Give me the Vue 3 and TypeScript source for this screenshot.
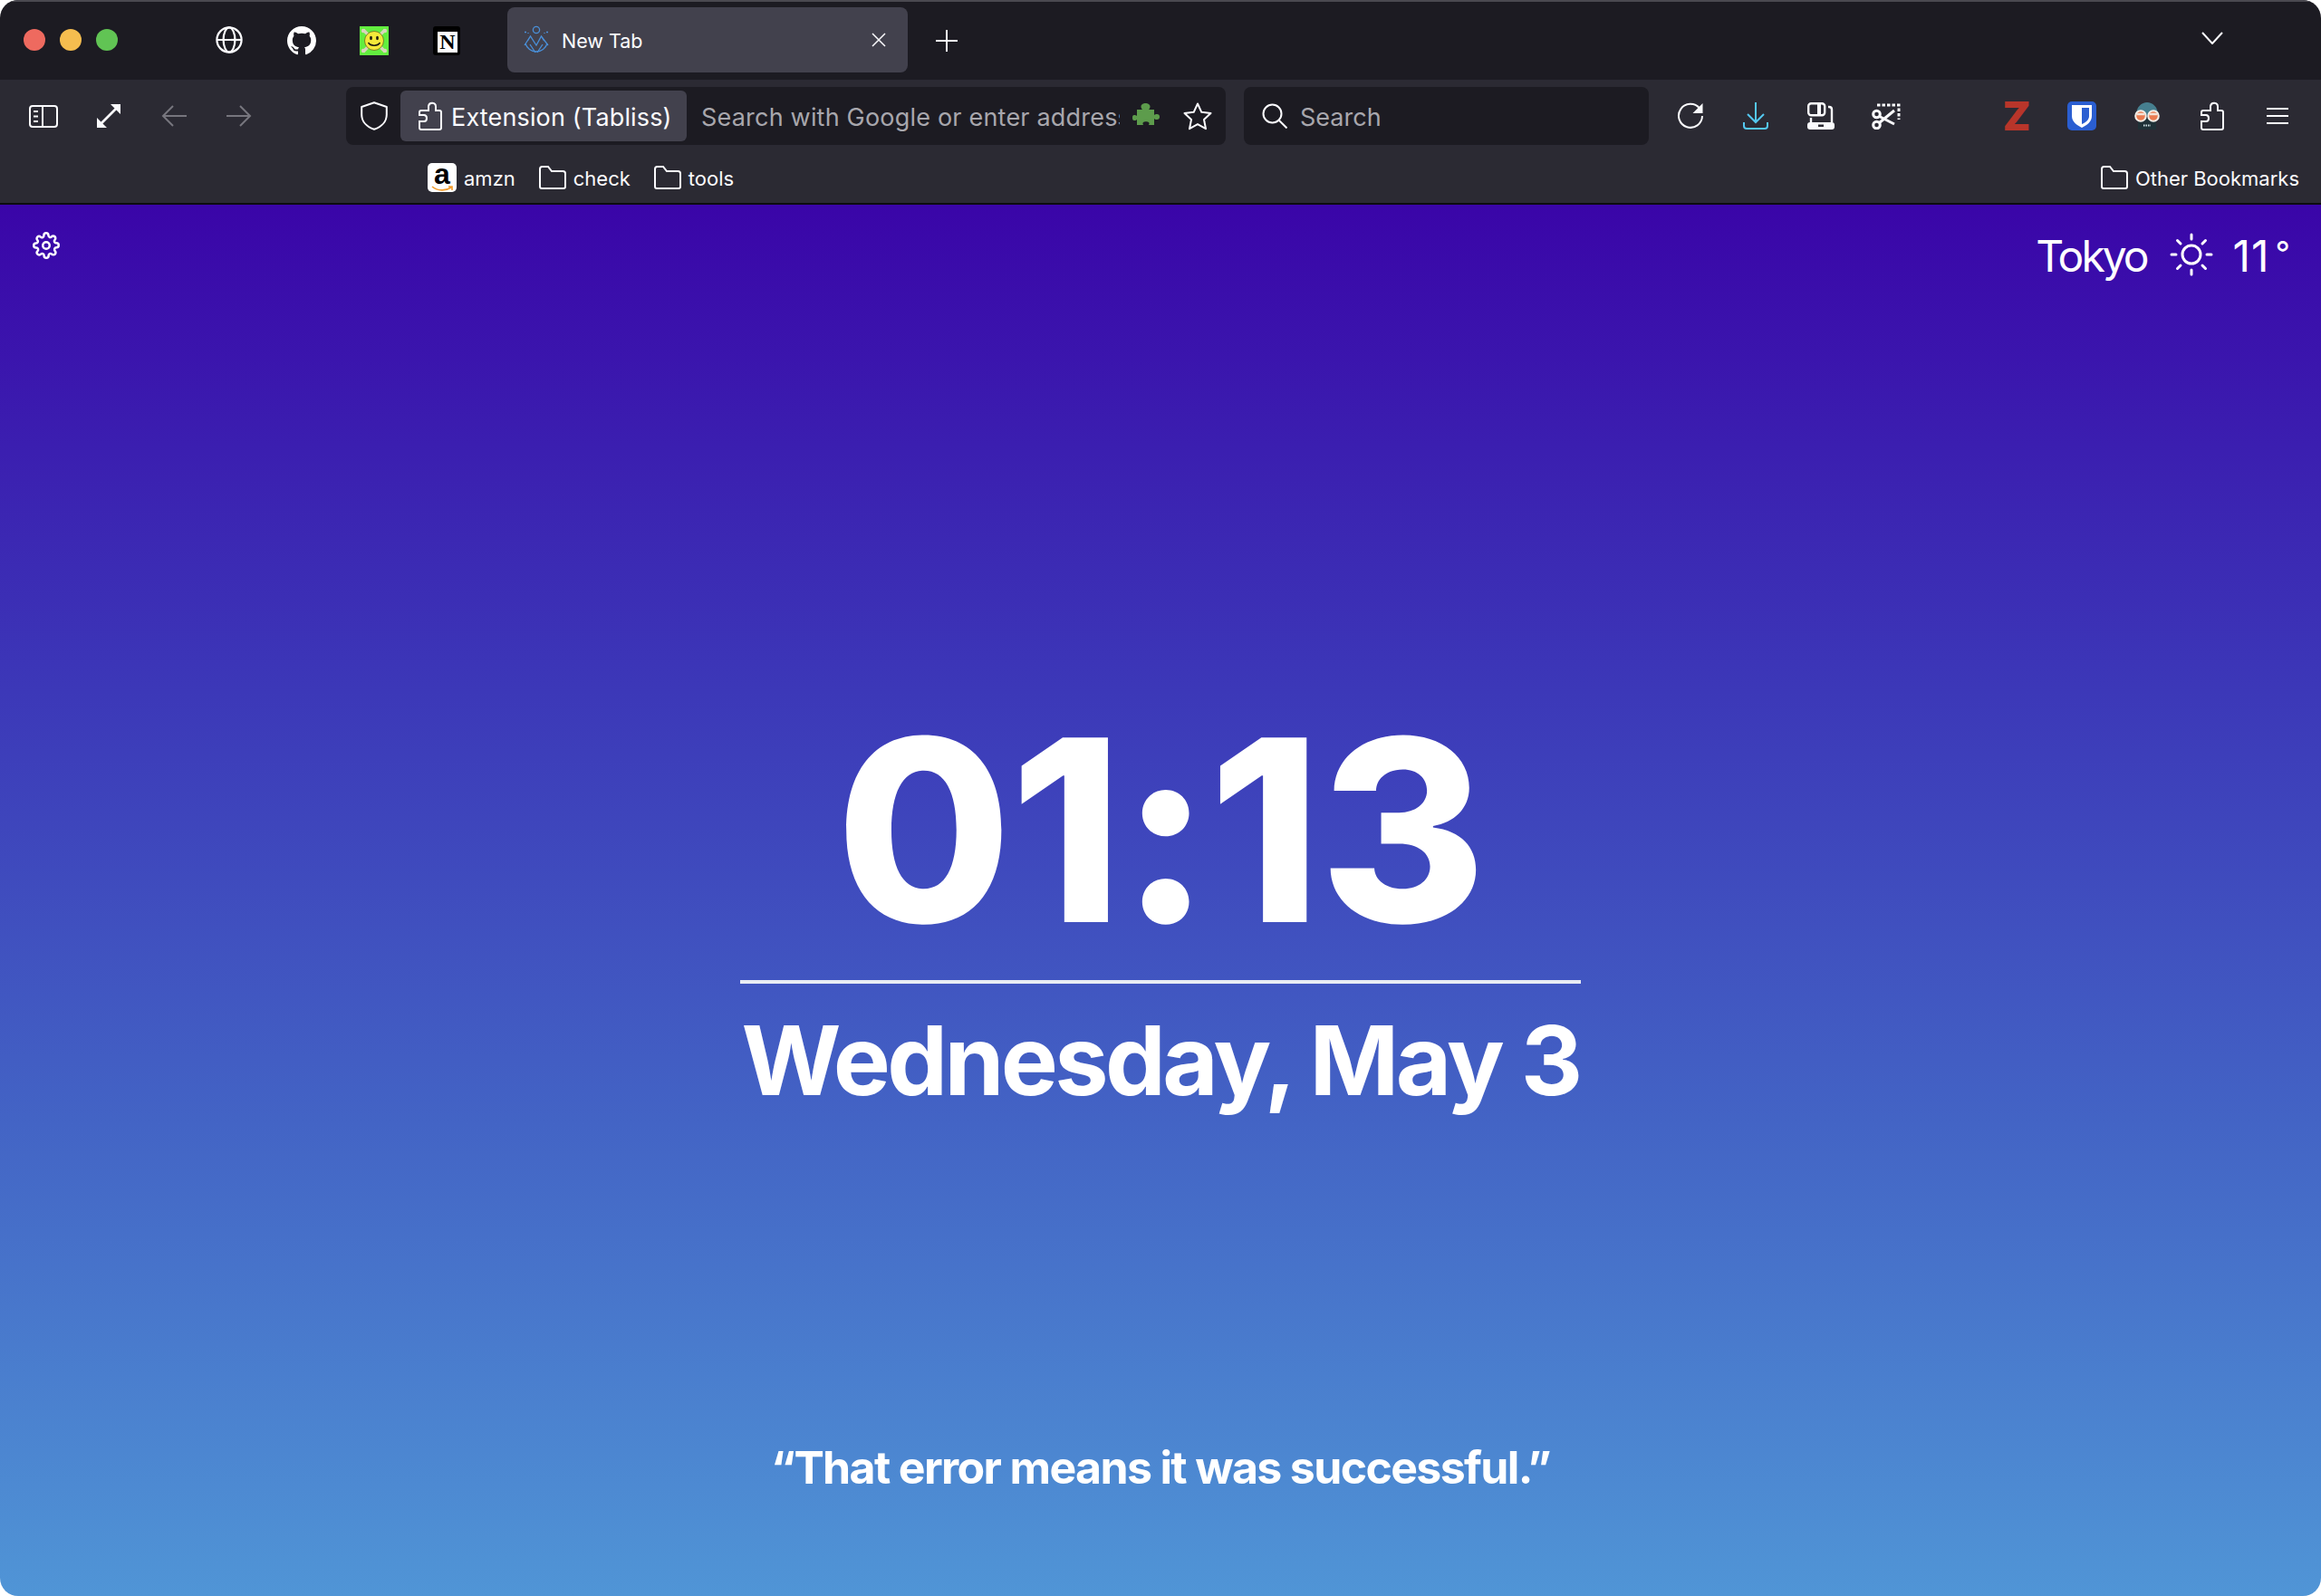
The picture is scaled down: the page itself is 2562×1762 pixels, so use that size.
<script setup lang="ts">
const bookmarks = ["check", "tools"]
</script>

<template>
<div class="window">
    <div class="titlebar">
        <div class="lights">
            <span class="light red"></span>
            <span class="light yellow"></span>
            <span class="light green"></span>
        </div>
        <div class="pinned">
            <div class="pin">
                <svg width="30" height="30" viewBox="0 0 30 30" fill="none" stroke="#fbfbfe" stroke-width="2.2">
                    <circle cx="15" cy="15" r="13.6"/>
                    <ellipse cx="15" cy="15" rx="6.4" ry="13.6"/>
                    <path d="M1.5 15h27"/>
                </svg>
            </div>
            <div class="pin">
                <svg width="32" height="32" viewBox="0 0 16 16" fill="#fff">
                    <path d="M8 0C3.58 0 0 3.58 0 8c0 3.54 2.29 6.53 5.47 7.59.4.07.55-.17.55-.38 0-.19-.01-.82-.01-1.49-2.01.37-2.53-.49-2.69-.94-.09-.23-.48-.94-.82-1.13-.28-.15-.68-.52-.01-.53.63-.01 1.08.58 1.23.82.72 1.21 1.87.87 2.33.66.07-.52.28-.87.51-1.07-1.78-.2-3.64-.89-3.64-3.95 0-.87.31-1.59.82-2.15-.08-.2-.36-1.02.08-2.12 0 0 .67-.21 2.2.82.64-.18 1.32-.27 2-.27.68 0 1.36.09 2 .27 1.53-1.04 2.2-.82 2.2-.82.44 1.1.16 1.92.08 2.12.51.56.82 1.27.82 2.15 0 3.07-1.87 3.75-3.65 3.95.29.25.54.73.54 1.48 0 1.07-.01 1.93-.01 2.2 0 .21.15.46.55.38A8.013 8.013 0 0016 8c0-4.42-3.58-8-8-8z"/>
                </svg>
            </div>
            <div class="pin">
                <svg width="32" height="32" viewBox="0 0 32 32">
                    <rect width="32" height="32" fill="#63ee3f"/>
                    <path d="M4 4L28 28M28 4L4 28" stroke="#d9d5bb" stroke-width="3.4"/>
                    <circle cx="4" cy="5" r="2.200" fill="#d9d5bb"/>
                    <circle cx="28" cy="5" r="2.200" fill="#d9d5bb"/>
                    <circle cx="4" cy="27" r="2.200" fill="#d9d5bb"/>
                    <circle cx="28" cy="27" r="2.200" fill="#d9d5bb"/>
                    <circle cx="16" cy="16" r="10.500" fill="#f3e93a" stroke="#6b6a22" stroke-width=".8"/>
                    <ellipse cx="12.5" cy="13" rx="1.4" ry="2.2" fill="#1c1b10"/>
                    <ellipse cx="19.5" cy="13" rx="1.4" ry="2.2" fill="#1c1b10"/>
                    <path d="M9.5 18c2.5 4.2 10.500 4.200 13 0" fill="none" stroke="#1c1b10" stroke-width="1.500"/>
                </svg>
            </div>
            <div class="pin">
                <div class="notion">N</div>
            </div>
        </div>
        <div class="tab">
            <svg class="tab-icon" width="30" height="32" viewBox="0 0 30 32" fill="none" stroke="#4a90d9" stroke-width="1.300">
                <circle cx="15" cy="5" r="3.600"/>
                <path d="M2 7.500h2M26 7.500h2M6 8v1M24 8v1"/>
                <path d="M3 20a12.500 12.500 0 0 0 24 0"/>
                <path d="M2 22L8.500 12L15 22L20.500 12L28 22M8.500 12l-3 5M20.500 12l3 5"/>
                <path d="M8 21l6 9M22 21l-6 9"/>
            </svg>
            <span class="tab-title">New Tab</span>
            <svg class="tab-close" width="16" height="16" viewBox="0 0 16 16" stroke="#fbfbfe" stroke-width="1.500">
                <path d="M1 1l14 14M15 1L1 15"/>
            </svg>
        </div>
        <svg class="new-tab" width="24" height="24" viewBox="0 0 24 24" stroke="#fbfbfe" stroke-width="2">
            <path d="M12 0v24M0 12h24"/>
        </svg>
        <svg class="tabs-list" width="24" height="14" viewBox="0 0 24 14" fill="none" stroke="#fbfbfe" stroke-width="2">
            <path d="M1 1l11 12L23 1"/>
        </svg>
    </div>

    <div class="toolbar">
        <div class="nav-row">
            <div class="slot">
                <svg width="32" height="25" viewBox="0 0 32 25" fill="none" stroke="#fbfbfe" stroke-width="2">
                    <rect x="1" y="1" width="30" height="23" rx="3"/>
                    <path d="M15 1v23M5 7h5M5 12.500h5M5 18h5"/>
                </svg>
            </div>
            <div class="slot">
                <svg width="26" height="26" viewBox="0 0 26 26" fill="#fbfbfe" stroke="none">
                    <path d="M5 21L21 5" stroke="#fbfbfe" stroke-width="2.600"/>
                    <path d="M15 0h11v11zM0 15l11 11H0z"/>
                </svg>
            </div>
            <div class="slot">
                <svg width="28" height="24" viewBox="0 0 28 24" fill="none" stroke="#77767e" stroke-width="2">
                    <path d="M28 12H2M13 1L2 12l11 11"/>
                </svg>
            </div>
            <div class="slot">
                <svg width="28" height="24" viewBox="0 0 28 24" fill="none" stroke="#77767e" stroke-width="2">
                    <path d="M0 12h26M15 1l11 11-11 11"/>
                </svg>
            </div>

            <div class="urlbar">
                <div class="shield">
                    <svg width="30" height="32" viewBox="0 0 30 32" fill="none" stroke="#fbfbfe" stroke-width="2">
                        <path d="M15 1.200L28.800 6v8.500c0 7.500-5.500 13.500-13.800 16.300C6.700 28 1.200 22 1.200 14.500V6z" stroke-linejoin="round"/>
                    </svg>
                </div>
                <div class="chip">
                    <svg width="26" height="32" viewBox="0 0 26 32" fill="none" stroke="#fbfbfe" stroke-width="2">
                        <path d="M3 31h20q2 0 2-2V12q0-2-2-2h-4V5.500C19 1 12 0 11 5v5H3q-2 0-2 2v3h5c4 0 4 7 0 7H1v7q0 2 2 2z"/>
                    </svg>
                    <span class="bar-text">Extension (Tabliss)</span>
                </div>
                <div class="placeholder bar-text">Search with Google or enter address</div>
                <svg class="green-puzzle" width="30" height="30" viewBox="0 0 30 30" fill="#5d9c4c">
                    <path d="M5 8h6c-1-1-1.500-2-1.500-3.500C9.500 2.500 12 1 14.500 1s5 1.500 5 3.500c0 1.500-.5 2.500-1.500 3.500h6v6c1-1 2-1 3-1 2 0 3 1 3 3s-1 3-3 3c-1 0-2 0-3-1v7h-6c.5-1 1-2 0-3-1-1-5-1-6 0-1 1-.5 2 0 3H5v-6c-1 1-2 1-3 1-1.500 0-2-1-2-3s.5-3 2-3c1 0 2 0 3 1z"/>
                </svg>
                <svg class="star" width="32" height="31" viewBox="0 0 32 31" fill="none" stroke="#fbfbfe" stroke-width="2" stroke-linejoin="round">
                    <path d="M16 1.500l4.300 9.300 10.200 1.200-7.500 7 2 10.200-9-5.100-9 5.100 2-10.200-7.500-7 10.200-1.200z"/>
                </svg>
            </div>

            <div class="searchbar">
                <svg width="28" height="28" viewBox="0 0 28 28" fill="none" stroke="#fbfbfe" stroke-width="2">
                    <circle cx="11.500" cy="11.500" r="10"/>
                    <path d="M18.500 18.500L27.500 27.500"/>
                </svg>
                <span class="bar-text">Search</span>
            </div>

            <div class="slot first-action">
                <svg width="30" height="30" viewBox="0 0 30 30" fill="none" stroke="#fbfbfe" stroke-width="2">
                    <path d="M25 6.500A13 13 0 1 0 28 15"/>
                    <path d="M28.500 1v11h-11z" fill="#fbfbfe" stroke="none"/>
                </svg>
            </div>
            <div class="slot">
                <svg width="28" height="30" viewBox="0 0 28 30" fill="none" stroke="#54c8f0" stroke-width="2">
                    <path d="M14 0v21M5 13l9 9 9-9M1 22v4q0 3 3 3h20q3 0 3-3v-4"/>
                </svg>
            </div>
            <div class="slot">
                <svg width="30" height="30" viewBox="0 0 30 30" fill="none" stroke="#fbfbfe" stroke-width="2.400">
                    <rect x="1.200" y="1.200" width="18" height="13" rx="3"/>
                    <path d="M13 1.200v13" stroke-width="4"/>
                    <path d="M23 5h1q3 0 3 3v14M4 17v6"/>
                    <path d="M3 22h24q3 0 3 3v2q0 3-3 3H3q-3 0-3-3v-2q0-3 3-3z" fill="#fbfbfe" stroke="none"/>
                    <rect x="12" y="24.500" width="6" height="2.500" fill="#2b2a33" stroke="none"/>
                </svg>
            </div>
            <div class="slot">
                <svg width="32" height="30" viewBox="0 0 32 30" fill="none" stroke="#fbfbfe" stroke-width="3">
                    <path d="M6 3h24v16" stroke-dasharray="3.500 2"/>
                    <circle cx="5.500" cy="13" r="3.800"/>
                    <circle cx="5.500" cy="25" r="3.800"/>
                    <path d="M8.500 15.500L25 24M8.500 22.500L25 9"/>
                </svg>
            </div>

            <div class="slot ext-gap">
                <span class="z-logo">Z</span>
            </div>
            <div class="slot">
                <svg width="32" height="32" viewBox="0 0 32 32">
                    <rect width="32" height="32" rx="5" fill="#2a5ed1"/>
                    <path d="M5 4h22v12c0 6-5 10-11 13C10 26 5 22 5 16z" fill="#fff"/>
                    <path d="M16 7h8v9c0 4-3 7-8 9z" fill="#2a5ed1"/>
                </svg>
            </div>
            <div class="slot">
                <svg width="30" height="30" viewBox="0 0 30 30">
                    <path d="M3 14C3 5 9 0 15 0s12 5 12 14z" fill="#467f8f"/>
                    <path d="M5 17h20v13H5z" fill="#1f3137"/>
                    <circle cx="8" cy="15" r="5.800" fill="#ea7b50" stroke="#f4efe8" stroke-width="2"/>
                    <circle cx="22" cy="15" r="5.800" fill="#ea7b50" stroke="#f4efe8" stroke-width="2"/>
                    <path d="M3.500 13h9M17.500 13h9" stroke="#f4e2d6" stroke-width="2.400"/>
                    <path d="M11 25.500h8" stroke="#cfe1e4" stroke-width="2" stroke-dasharray="1.500 1"/>
                </svg>
            </div>
            <div class="slot">
                <svg width="26" height="32" viewBox="0 0 26 32" fill="none" stroke="#fbfbfe" stroke-width="2">
                    <path d="M3 31h20q2 0 2-2V12q0-2-2-2h-4V5.500C19 1 12 0 11 5v5H3q-2 0-2 2v3h5c4 0 4 7 0 7H1v7q0 2 2 2z"/>
                </svg>
            </div>
            <div class="slot">
                <svg width="24" height="18" viewBox="0 0 24 18" stroke="#fbfbfe" stroke-width="2">
                    <path d="M0 1h24M0 9h24M0 17h24"/>
                </svg>
            </div>
        </div>

        <div class="bookmarks">
            <div class="bookmark amzn">
                <div class="amzn-icon">
                    <span>a</span>
                    <svg width="24" height="7" viewBox="0 0 24 7" fill="none" stroke="#f39c2b" stroke-width="1.600">
                        <path d="M1 1c6 5 15 5 21 1M19 1h4v4"/>
                    </svg>
                </div>
                <span class="mark-text">amzn</span>
            </div>
            <div class="bookmark" v-for="name in bookmarks" :key="name">
                <svg class="folder" width="30" height="26" viewBox="0 0 30 26" fill="none" stroke="#fbfbfe" stroke-width="2">
                    <path d="M1 23V3.500Q1 1 3.500 1h6.500l4 5h12.500q2.500 0 2.500 2.500V23q0 2-2 2H3q-2 0-2-2z"/>
                </svg>
                <span class="mark-text">{{ name }}</span>
            </div>
            <div class="bookmark other">
                <svg class="folder" width="30" height="26" viewBox="0 0 30 26" fill="none" stroke="#fbfbfe" stroke-width="2">
                    <path d="M1 23V3.500Q1 1 3.500 1h6.500l4 5h12.500q2.500 0 2.500 2.500V23q0 2-2 2H3q-2 0-2-2z"/>
                </svg>
                <span class="mark-text">Other Bookmarks</span>
            </div>
        </div>
    </div>

    <div class="page">
        <div class="top-row">
            <svg class="gear" width="30" height="30" viewBox="0 0 24 24" fill="none" stroke="#fff" stroke-width="2" stroke-linejoin="round">
                <circle cx="12" cy="12" r="3"/>
                <path d="M19.400 15a1.650 1.650 0 0 0 .33 1.820l.06.06a2 2 0 1 1-2.830 2.830l-.06-.06a1.650 1.650 0 0 0-2.800 1.170V21a2 2 0 0 1-4 0v-.09A1.650 1.650 0 0 0 7.300 19.700l-.06.06a2 2 0 1 1-2.830-2.830l.06-.06a1.650 1.650 0 0 0-1.170-2.800H3a2 2 0 0 1 0-4h.09A1.650 1.650 0 0 0 4.300 7.300l-.06-.06a2 2 0 1 1 2.830-2.830l.06.06a1.650 1.650 0 0 0 2.800-1.170V3a2 2 0 0 1 4 0v.09a1.650 1.650 0 0 0 2.800 1.170l.06-.06a2 2 0 1 1 2.830 2.830l-.06.06a1.650 1.650 0 0 0 1.170 2.800H21a2 2 0 0 1 0 4h-.09a1.650 1.650 0 0 0-1.510 1z"/>
            </svg>
            <div class="weather">
                <span class="city">Tokyo</span>
                <svg class="sun" width="48" height="48" viewBox="0 0 48 48" fill="none" stroke="#fff" stroke-width="3" stroke-linecap="round">
                    <circle cx="24" cy="24" r="10"/>
                    <path d="M24 2v5M24 41v5M2 24h5M41 24h5M8.500 8.500l3.500 3.500M36 36l3.500 3.500M8.500 39.500l3.500-3.500M36 12l3.500-3.500"/>
                </svg>
                <span class="temp">11<span class="deg">°</span></span>
            </div>
        </div>

        <div class="center">
            <div class="clock">01:13</div>
            <div class="rule"></div>
            <div class="date">Wednesday, May 3</div>
        </div>

        <div class="quote">“That error means it was successful.”</div>
    </div>
</div>
</template>

<style>
html, body {
    margin: 0;
    background: #fff;
}
</style>

<style scoped>
.window {
    width: 2562px;
    height: 1762px;
    display: flex;
    flex-direction: column;
    border-radius: 20px;
    overflow: hidden;
    font-family: Inter, "Noto Sans", sans-serif;
    color: #fbfbfe;
}
.titlebar {
    height: 88px;
    flex: none;
    box-sizing: border-box;
    border-top: 2px solid #4a4950;
    background: #1c1b22;
    display: flex;
    align-items: center;
}
.lights {
    display: flex;
    gap: 16px;
    margin-left: 26px;
    margin-top: -3px;
}
.light {
    width: 24px;
    height: 24px;
    border-radius: 50%;
}
.red { background: #ee6a5f; }
.yellow { background: #f5bd4f; }
.green { background: #61c454; }
.pinned {
    display: flex;
    margin-left: 83px;
}
.pin {
    width: 80px;
    display: flex;
    justify-content: center;
}
.notion {
    width: 30px;
    height: 32px;
    box-sizing: border-box;
    background: #fff;
    border: 3px solid #000;
    border-top-width: 6px;
    border-left-width: 5px;
    border-radius: 3px;
    color: #000;
    font-family: "Liberation Serif", serif;
    font-weight: 700;
    font-size: 24px;
    line-height: 22px;
    text-align: center;
}
.tab {
    width: 442px;
    height: 72px;
    margin-left: 27px;
    margin-top: -2px;
    box-sizing: border-box;
    background: #42414d;
    border-radius: 8px;
    display: flex;
    align-items: center;
    padding-left: 17px;
}
.tab-title {
    font-size: 21.5px;
    margin-left: 13px;
    padding-top: 2px;
}
.tab-close {
    margin-left: auto;
    margin-right: 24px;
}
.new-tab {
    margin-left: 31px;
}
.tabs-list {
    margin-left: auto;
    margin-right: 108px;
    margin-top: -6px;
}
.toolbar {
    flex: none;
    height: 138px;
    box-sizing: border-box;
    background: #2b2a33;
    border-bottom: 2px solid #0c0c10;
}
.nav-row {
    height: 80px;
    display: flex;
    align-items: center;
    padding-left: 12px;
}
.slot {
    width: 72px;
    flex: none;
    display: flex;
    justify-content: center;
    align-items: center;
}
.first-action { margin-left: 10px; }
.ext-gap { margin-left: 72px; }
.z-logo {
    font-weight: 900;
    font-size: 44px;
    line-height: 32px;
    color: #b8352a;
}
.urlbar {
    width: 971px;
    height: 64px;
    margin-left: 82px;
    flex: none;
    background: #1c1b22;
    border-radius: 8px;
    display: flex;
    align-items: center;
    font-size: 27px;
}
.bar-text {
    padding-top: 3px;
    line-height: 32px;
}
.shield {
    width: 60px;
    box-sizing: border-box;
    padding-left: 2px;
    display: flex;
    justify-content: center;
}
.chip {
    width: 316px;
    height: 56px;
    box-sizing: border-box;
    background: #42414d;
    border-radius: 6px;
    display: flex;
    align-items: center;
    gap: 10px;
    padding-left: 20px;
    white-space: nowrap;
    letter-spacing: .15px;
}
.placeholder {
    width: 462px;
    margin-left: 16px;
    overflow: hidden;
    white-space: nowrap;
    color: #a8a7ad;
    letter-spacing: .2px;
}
.green-puzzle { margin-left: 14px; }
.star { margin-left: 26px; }
.searchbar {
    width: 447px;
    height: 64px;
    margin-left: 20px;
    flex: none;
    box-sizing: border-box;
    padding-left: 20px;
    background: #1c1b22;
    border-radius: 8px;
    display: flex;
    align-items: center;
    gap: 14px;
    font-size: 27px;
    color: #a8a7ad;
}
.bookmarks {
    height: 56px;
    display: flex;
    align-items: center;
    padding-left: 472px;
    padding-right: 24px;
    font-size: 22px;
}
.bookmark {
    display: flex;
    align-items: center;
    gap: 8px;
    margin-right: 26px;
}
.mark-text {
    padding-top: 2px;
}
.bookmark.other {
    margin-left: auto;
    margin-right: 0;
}
.amzn-icon {
    width: 32px;
    height: 32px;
    background: #fff;
    border-radius: 5px;
    display: flex;
    flex-direction: column;
    align-items: center;
    color: #000;
    font-family: "Liberation Sans", sans-serif;
    font-weight: 700;
    font-size: 32px;
    line-height: 25px;
}
.amzn-icon svg { flex: none; }
.page {
    flex: 1;
    display: flex;
    flex-direction: column;
    background: linear-gradient(to bottom, #3a05a8 0%, #3c38b8 35%, #4364c5 66%, #5095d6 100%);
    color: #fff;
}
.top-row {
    height: 100px;
    display: flex;
    align-items: flex-start;
    justify-content: space-between;
    padding: 30px 34px 0 36px;
}
.weather {
    display: flex;
    align-items: center;
    font-size: 48px;
    line-height: 48px;
    margin-top: -1px;
}
.city {
    letter-spacing: -3px;
    padding-top: 4px;
}
.sun { margin: 0 22px 0 25px; }
.temp {
    letter-spacing: 1px;
    padding-top: 4px;
}
.deg {
    font-size: 36px;
    line-height: 0;
    margin-left: 6px;
    vertical-align: 8px;
    letter-spacing: 0;
}
.center {
    width: 928px;
    margin: 416px auto 0;
    display: flex;
    flex-direction: column;
    align-items: center;
}
.clock {
    font-size: 280px;
    font-weight: 800;
    line-height: 290px;
    letter-spacing: -1.500px;
}
.rule {
    width: 100%;
    height: 4px;
    background: #e8ecf4;
    margin-top: 20px;
}
.date {
    font-size: 106px;
    font-weight: 700;
    line-height: 130px;
    letter-spacing: -3.600px;
    white-space: nowrap;
    margin-top: 20px;
}
.quote {
    font-size: 50px;
    font-weight: 700;
    line-height: 60px;
    text-align: center;
    margin-top: auto;
    margin-bottom: 112px;
    letter-spacing: -1.650px;
}
</style>
